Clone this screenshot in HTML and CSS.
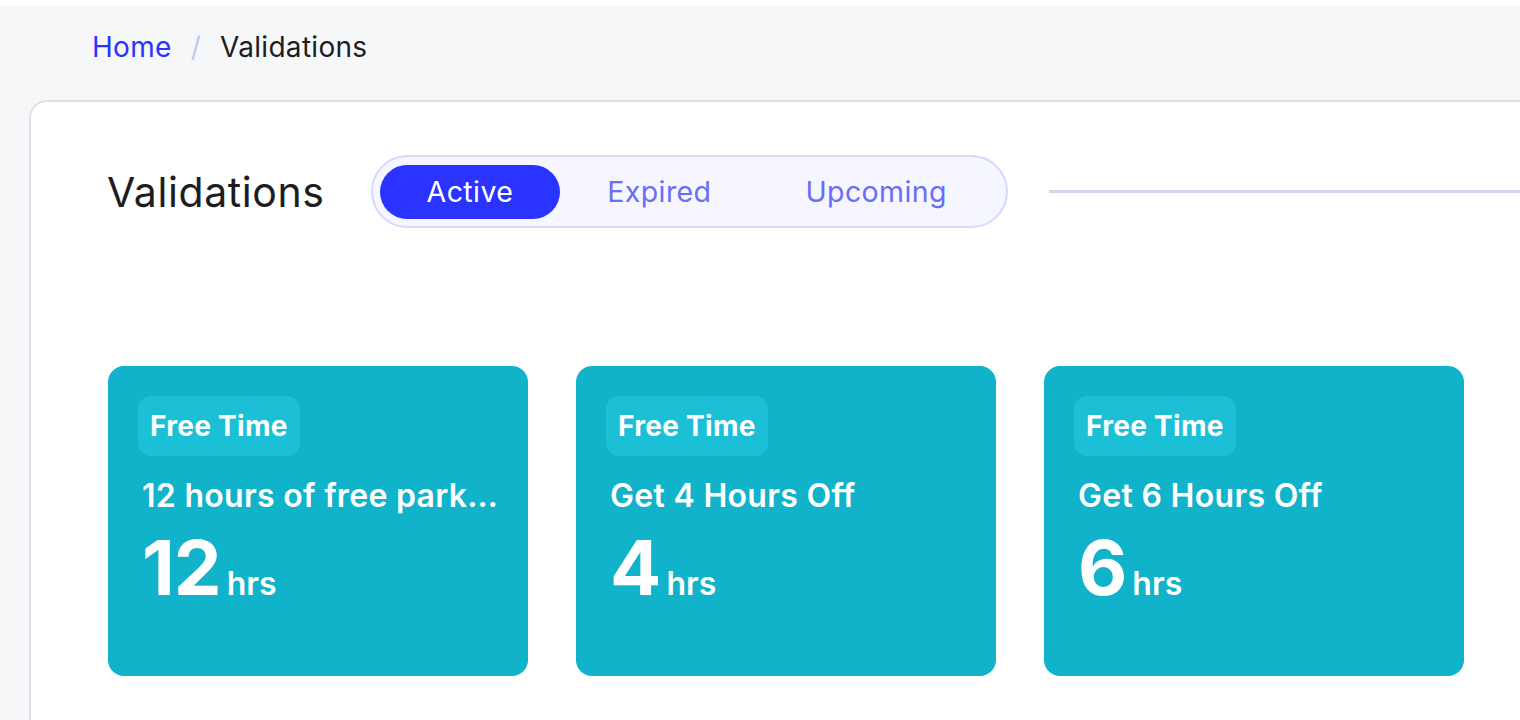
FILE: index.html
```html
<!DOCTYPE html>
<html lang="en">
<head>
    <meta charset="UTF-8">
    <title>Validations</title>
    <link rel="stylesheet" href="styles.css">
</head>
<body>
    <div class="page">
        <!-- 상단 경로 -->
        <nav class="crumbs">
            <a href="" class="crumb-link">Home</a>
            <span class="crumb-sep">/</span>
            <span class="crumb-cur">Validations</span>
        </nav>

        <!-- 메인 패널 -->
        <main class="panel">
            <div class="panel-head">
                <h1 class="tit">Validations</h1>
                <div class="tabs">
                    <a href="" class="tab on">Active</a>
                    <a href="" class="tab">Expired</a>
                    <a href="" class="tab">Upcoming</a>
                </div>
                <div class="head-line"></div>
            </div>

            <!-- 카드 목록 -->
            <div class="cards">
                <div class="card">
                    <span class="badge">Free Time</span>
                    <p class="card-tit">12 hours of free parking for guests</p>
                    <p class="card-val"><b>12</b><span>hrs</span></p>
                </div>
                <div class="card">
                    <span class="badge">Free Time</span>
                    <p class="card-tit">Get 4 Hours Off</p>
                    <p class="card-val"><b>4</b><span>hrs</span></p>
                </div>
                <div class="card">
                    <span class="badge">Free Time</span>
                    <p class="card-tit">Get 6 Hours Off</p>
                    <p class="card-val"><b>6</b><span>hrs</span></p>
                </div>
            </div>
        </main>
    </div>
</body>
</html>
```

FILE: styles.css
```css
html,
body {
    margin: 0;
    padding: 0;
    height: 100%;
}

body {
    background: #f6f7f9;
    font-family: Inter, "Noto Sans", sans-serif;
    color: #1d1d1f;
    overflow: hidden;
}

.page {
    border-top: 6px solid #fff;
    height: 100%;
    box-sizing: border-box;
}

/* 1. 경로 */
.crumbs {
    display: flex;
    align-items: center;
    gap: 19px;
    height: 94px;
    padding: 0 0 12px 92px;
    box-sizing: border-box;
    font-size: 28px;
    letter-spacing: 0.3px;
}

.crumb-link {
    color: #2b32ff;
    text-decoration: none;
}

.crumb-sep {
    color: #c3c6f3;
}

.crumb-cur {
    color: #1d1d1f;
}

/* 2. 패널 */
.panel {
    margin-left: 29px;
    margin-right: -40px;
    height: 640px;
    background: #fff;
    border: 2px solid #e1e2e5;
    border-radius: 18px;
    padding: 53px 0 0 76px;
}

.panel-head {
    display: flex;
    align-items: center;
    height: 73px;
}

.tit {
    margin: 0 46px 0 0;
    font-size: 41px;
    font-weight: 400;
    letter-spacing: 0.6px;
}

/* 탭 */
.tabs {
    display: flex;
    align-items: center;
    height: 73px;
    width: 637px;
    padding: 0 7px;
    box-sizing: border-box;
    background: #f5f6ff;
    border: 2px solid #d6d9fb;
    border-radius: 37px;
}

.tab {
    height: 54px;
    line-height: 54px;
    padding: 0 47px;
    border-radius: 27px;
    font-size: 28.5px;
    letter-spacing: 0.4px;
    color: #6a6ef6;
    text-decoration: none;
}

.tab.on {
    background: #2a33ff;
    color: #fff;
}

.head-line {
    flex: 1;
    height: 3px;
    margin-left: 41px;
    background: #d2d4f8;
}

/* 카드 */
.cards {
    display: flex;
    gap: 48px;
    margin-top: 138px;
    margin-left: 1px;
}

.card {
    width: 420px;
    height: 310px;
    padding: 30px;
    box-sizing: border-box;
    background: #10b3ca;
    border-radius: 16px;
    color: #fff;
}

.badge {
    display: inline-block;
    height: 60px;
    line-height: 60px;
    padding: 0 12px;
    border-radius: 13px;
    background: #1bc0d7;
    font-size: 28px;
    font-weight: 700;
    letter-spacing: 0.3px;
}

.card-tit {
    margin: 20px 0 0 4px;
    font-size: 32px;
    font-weight: 600;
    letter-spacing: 0.3px;
    white-space: nowrap;
    overflow: hidden;
    text-overflow: ellipsis;
}

.card-val {
    display: flex;
    align-items: baseline;
    gap: 6px;
    margin: 9px 0 0 4px;
}

.card-val b {
    font-size: 76px;
    font-weight: 700;
    line-height: 86px;
    letter-spacing: -1px;
}

.card-val span {
    font-size: 32px;
    font-weight: 600;
}
```
